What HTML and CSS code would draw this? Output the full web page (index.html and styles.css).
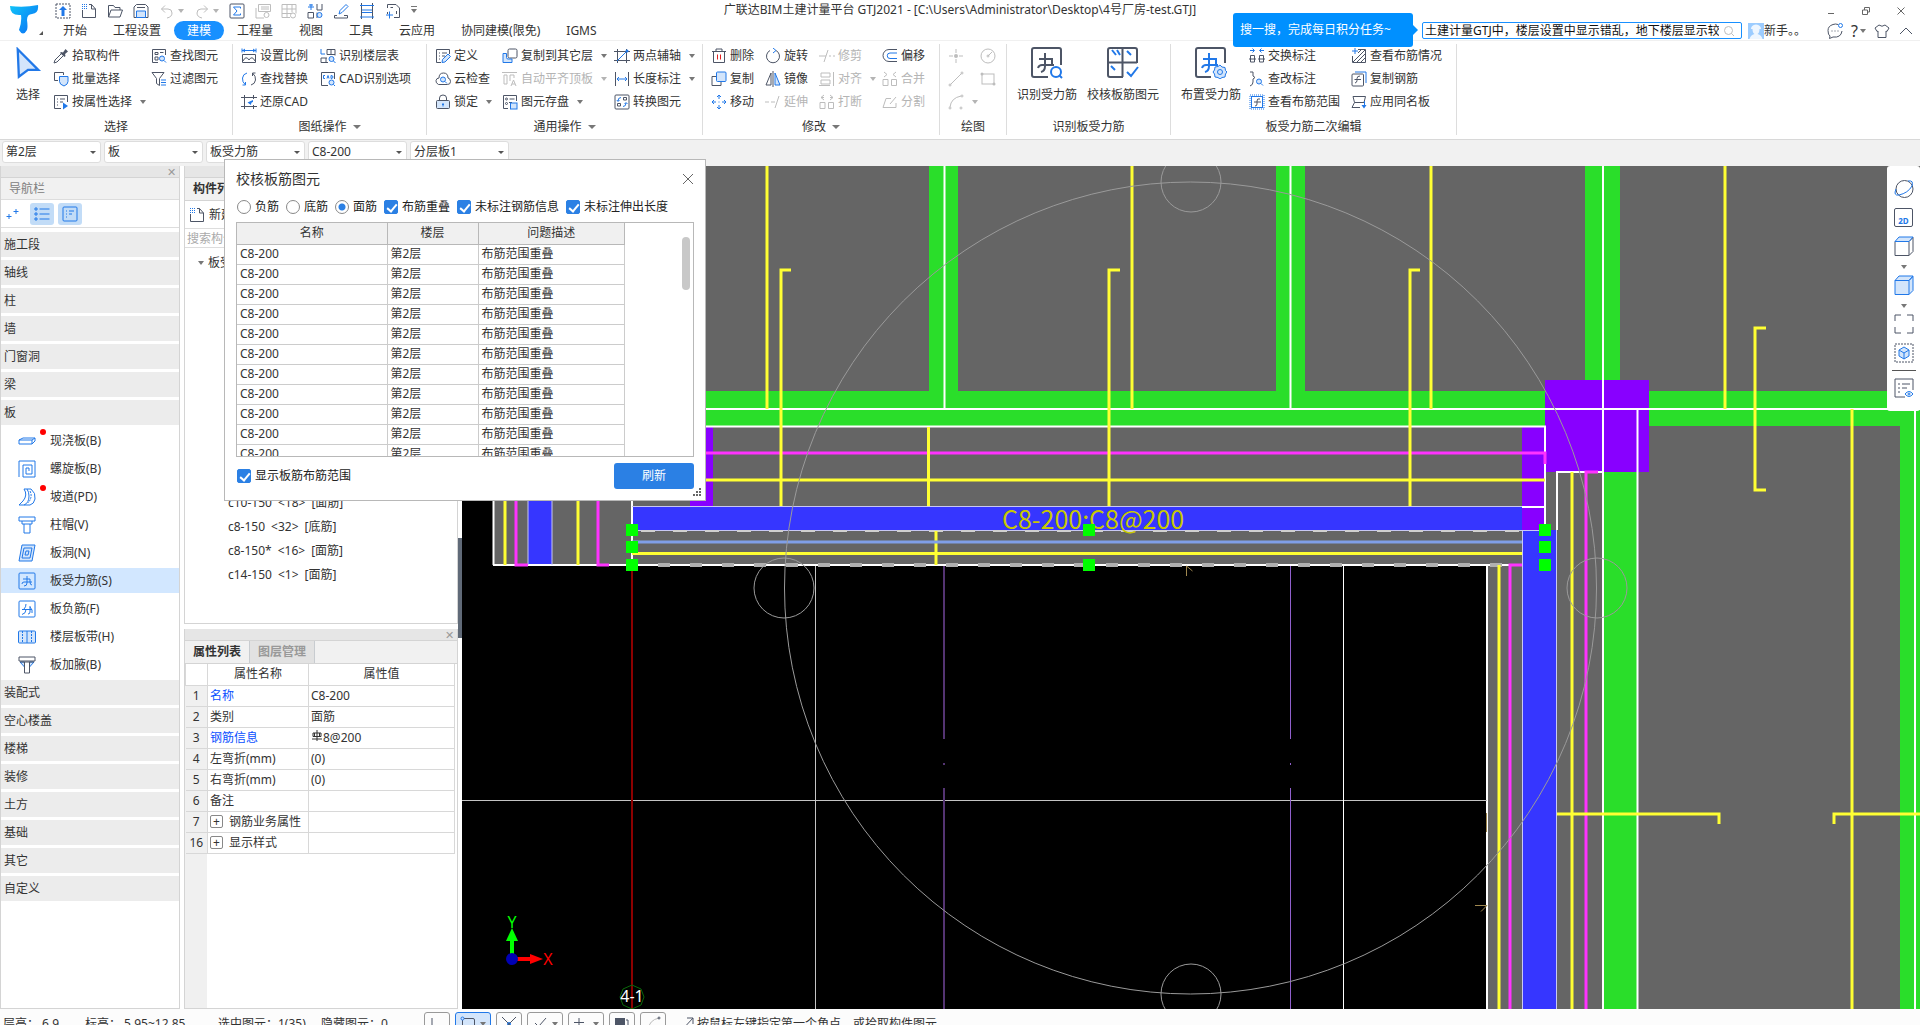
FILE: index.html
```html
<!DOCTYPE html>
<html lang="zh-CN">
<head>
    <meta charset="UTF-8">
    <meta name="viewport" content="width=device-width, initial-scale=1.0">
    <title>广联达BIM土建计量平台 GTJ2021</title>
    <link rel="stylesheet" href="styles.css">
</head>
<body>
<!-- icon sprite: k = dark line, b = blue line, g = disabled line, f = light blue fill -->
<svg class="sprite" aria-hidden="true">
    <symbol id="upload" viewBox="0 0 16 16"><rect class="k dash" x="1" y="1" width="14" height="14"/><path class="bf" d="M8 3l4 4H9.500v6h-3V7H4z"/></symbol>
    <symbol id="new" viewBox="0 0 16 16"><path class="k" d="M1.500 7v7.500h13V6L10.500 1.500H8M10.500 1.500V6h4"/><path class="b dots" d="M1 1.500h5M1 3.500h5M1 5.500h5"/></symbol>
    <symbol id="open" viewBox="0 0 16 16"><path class="k" d="M1.500 14V2.500h5l1.500 2h5V7M1.500 14L4 7h11.500L13 14z"/></symbol>
    <symbol id="save" viewBox="0 0 16 16"><path class="k" d="M1 14.500V4l2.500-2.500h9L15 4v10.500z"/><path class="k" d="M4 4.500h8"/><path class="b f" d="M3.500 14.500V8h9v6.500z"/></symbol>
    <symbol id="undo" viewBox="0 0 16 16"><path class="g" d="M6 2.500L2.500 6 6 9.500M2.500 6H9q4 0 4 4t-5 5"/></symbol>
    <symbol id="redo" viewBox="0 0 16 16"><path class="g" d="M10 2.500L13.500 6 10 9.500M13.500 6H7q-4 0-4 4t5 5"/></symbol>
    <symbol id="sum" viewBox="0 0 16 16"><rect class="k" x="1" y="1" width="14" height="14" rx="1"/><path class="b" d="M11.500 5.500V4h-7L8 8l-3.500 4h7v-1.500"/></symbol>
    <symbol id="sheet" viewBox="0 0 16 16"><path class="g" d="M3.500 8.500V1.500h12v7M1 5v10h8M3.500 8.500h12M6 4h8M6 6h8"/><circle class="g" cx="11.500" cy="12" r="2.500"/></symbol>
    <symbol id="gridg" viewBox="0 0 16 16"><path class="g" d="M1 1.500h14v9M1 1.500v13h8M6 1.500v13M11 1.500v8M1 6h14M1 10.500h9"/><circle class="g" cx="12" cy="12.500" r="2.500"/></symbol>
    <symbol id="layout" viewBox="0 0 16 16"><path class="k" d="M10 1v6h5V1M1 9.500h5.500V15H1zM10 15V9.500"/><path class="b" d="M4 1v6M1 4h6M2 2h4"/><circle class="b f" cx="12.500" cy="12" r="2.500"/></symbol>
    <symbol id="brush" viewBox="0 0 16 16"><path class="b" d="M6 11l1-3.500L13 1.500l2 2-6 6z"/><path class="k" d="M4 12.500H1.500V15h13v-2.500H11"/></symbol>
    <symbol id="frame" viewBox="0 0 16 16"><path class="k" d="M2.500 0v16M13.500 0v16"/><path class="b" d="M1 2.500h14M3 7h10M3 9.500h10M1 14h14"/></symbol>
    <symbol id="crop" viewBox="0 0 16 16"><path class="k" d="M2.500 5V1.500H11L14.500 5v9.500H9M2.500 9v2M5.500 4.500H8M11.500 11v-3"/><path class="b" d="M4.500 8.500v7M1 12h7"/></symbol>
    <symbol id="cursor" viewBox="0 0 24 28"><path class="b f thick" d="M3 2l18 18h-9l-8 6z"/></symbol>
    <symbol id="pick" viewBox="0 0 16 16"><path class="kf" d="M8 4l2 .5L12.500 1l2.500 2.500L12 6l.5 2-1 1-4.500-4z"/><path class="k" d="M8 6L2 12l-1 3 3-1 6-6"/></symbol>
    <symbol id="batch" viewBox="0 0 16 16"><path class="k" d="M5 9.500H1.500V1.500h9V4"/><path class="b f" d="M6.500 5.500h8.500v5q0 3-4 4.500-4.500-1.500-4.500-4.500z"/></symbol>
    <symbol id="attr" viewBox="0 0 16 16"><path class="k" d="M8 14.500H1.500V1.500h13V8M4 5h1M7 5h5M4 8h1M7 8h3M4 11h1"/><path class="bf" d="M10 8.500l5 3.500-5 3.500z"/></symbol>
    <symbol id="find" viewBox="0 0 16 16"><path class="k" d="M7 14.500H1.500V1.500h13V7M4 4.500h3v2H4zM9 4.500h3.500M4 9h3v3H4z"/><circle class="b f" cx="11" cy="10.500" r="2.500"/><path class="b" d="M13 12.500l2 2"/></symbol>
    <symbol id="filter" viewBox="0 0 16 16"><path class="k" d="M1 1.500h12L8.500 7.500v7l-3-2v-5z"/><path class="b" d="M10 9h5M10 11.500h5M10 14h5"/></symbol>
    <symbol id="scale" viewBox="0 0 16 16"><path class="b" d="M1 .5v4M15 .5v4M1 2.500h14M4 1L2 2.500 4 4M12 1l2 1.500L12 4"/><path class="k" d="M1.500 6.500h13v8h-13zM2 13q3-6 6-1 3-5 6 1"/></symbol>
    <symbol id="swap" viewBox="0 0 16 16"><path class="b" d="M6 2Q2 3 1.500 7t3 7M4.500 14H1.500M4.500 14v-3"/><path class="k" d="M10 14q4-1 4.500-5t-3-7M11.500 2h3M11.500 2v3"/></symbol>
    <symbol id="restore" viewBox="0 0 16 16"><path class="k" d="M3.500 1v14M0 3.500h16M12.500 1v4M0 12.500h16M12.500 11v4"/><path class="bf" d="M12 6v2q-2 0-2 3L6.500 8.500z"/></symbol>
    <symbol id="floors" viewBox="0 0 16 16"><path class="b" d="M1 1v5h4"/><path class="k" d="M7 1.500h8v6M7 1.500v5M11 1.500v5M7 6.500h8M1 10v4.500h7M6 10v4.500M1 10h6"/><circle class="b f" cx="11.500" cy="11" r="2.500"/><path class="b" d="M13.500 13l2 2"/></symbol>
    <symbol id="cad" viewBox="0 0 16 16"><path class="k" d="M8 14.500H1.500V1.500h13V8"/><path class="b" d="M5 4.500H3.500v3H5M7 7.500l1-3 1 3M11 4.500v3q2 0 2-1.500t-2-1.500"/><circle class="b f" cx="11.500" cy="11.500" r="2.500"/><path class="b" d="M13.500 13.500l1.500 1.500"/></symbol>
    <symbol id="define" viewBox="0 0 16 16"><path class="k" d="M6 14.500H1.500V1.500h13V6M4 5h1M7 5h5M4 8h1M7 8h3M4 11h1"/><path class="b f" d="M7 14.500l.5-3L13 6l2.500 2.500-5.500 5.500z"/></symbol>
    <symbol id="cloud" viewBox="0 0 16 16"><path class="k" d="M3.500 13.500Q.5 12 1 9.500T4 7q0-5 4.500-5T13 7q2.500.5 2.500 3.500t-3 3z"/><circle class="b f" cx="8" cy="8.500" r="2.500"/><path class="b" d="M10 10.500l2 2"/></symbol>
    <symbol id="lock" viewBox="0 0 16 16"><path class="k" d="M4.500 6V4q0-3 3.500-3t3.500 3v2"/><rect class="k f" x="1.500" y="6.500" width="13" height="8" rx="1"/><path class="b" d="M8 9v3.500M7 10.500h2"/></symbol>
    <symbol id="copyto" viewBox="0 0 16 16"><rect class="k" x="6" y="1" width="9" height="9" rx="1.500"/><path class="b f" d="M4.500 5.500H1v9h9V11H6q-1.500 0-1.500-1.500z"/></symbol>
    <symbol id="autotop" viewBox="0 0 16 16"><path class="g" d="M0 1.500h15M2 4h3v9H2zM8 10V4h4v3M9 15l2.500-6 2.500 6M10 13h3"/></symbol>
    <symbol id="stash" viewBox="0 0 16 16"><path class="k" d="M6 14.500H1.500V1.500h13V7M7.500 5h5M7 8.500h3"/><circle class="k" cx="4.500" cy="5" r="1"/><circle class="k" cx="4.500" cy="9.500" r="1"/><rect class="b f" x="8.500" y="9" width="6.500" height="6"/></symbol>
    <symbol id="axis" viewBox="0 0 16 16"><path class="k" d="M3.500 1v14M12.500 1v14M0 3.500h16M0 12.500h16"/><path class="b" d="M3 13L13 3"/><circle class="bf" cx="13" cy="3" r="1.500"/></symbol>
    <symbol id="length" viewBox="0 0 16 16"><path class="k" d="M1.500 1v14M14.500 1v14"/><path class="b" d="M3 8h10M5 6L3 8l2 2M11 6l2 2-2 2"/></symbol>
    <symbol id="convert" viewBox="0 0 16 16"><rect class="k" x="1" y="1" width="14" height="14" rx="1"/><path class="b" d="M7 3.500q-3 0-3 3.500M2.800 6L4 7.500 5.500 6M9 12.500q3 0 3-3.500M10.500 10L12 8.500l1.500 1.500"/><path class="k" d="M9.500 3.500h3V6h-3zM3.500 9.500h3V12h-3z"/></symbol>
    <symbol id="delete" viewBox="0 0 16 16"><path class="k" d="M1 3.500h14M5 3V1h6v2M2.500 4v10.500h11V4"/><path class="r" d="M6.500 6.500v5M9.500 6.500v5"/></symbol>
    <symbol id="copy" viewBox="0 0 16 16"><path class="k" d="M5 5.500H1v9h9V11"/><rect class="b f" x="5.500" y="1" width="9.500" height="9.500" rx="1"/></symbol>
    <symbol id="move" viewBox="0 0 16 16"><path class="b" d="M8 1v4M8 11v4M1 8h4M11 8h4M6 3l2-2 2 2M6 13l2 2 2-2M3 6L1 8l2 2M13 6l2 2-2 2M7.500 8h1"/></symbol>
    <symbol id="rotate" viewBox="0 0 16 16"><path class="k" d="M5 2.500A6.500 6.500 0 1 0 11 2.500"/><path class="b" d="M8 0l3 2.500L8 5"/></symbol>
    <symbol id="mirror" viewBox="0 0 16 16"><path class="k" d="M6 2v12H1z"/><path class="b f" d="M10 2v12h5z"/><path class="k" d="M8 0v16"/></symbol>
    <symbol id="extend" viewBox="0 0 16 16"><path class="g" d="M0 8h4M6 8h4M10 14l4-12"/></symbol>
    <symbol id="trim" viewBox="0 0 16 16"><path class="g" d="M0 8h7M5 14L9 2M10 8h2M14 8h2"/></symbol>
    <symbol id="align" viewBox="0 0 16 16"><path class="g" d="M2 2h9v4H2zM2 9h9v4H2zM14.500 1v14M0 14.500h11"/></symbol>
    <symbol id="break" viewBox="0 0 16 16"><path class="g" d="M1 8.500h5v6H1zM9.500 8.500h5v6h-5zM5 1L2 3.500 5 6M11 1l3 2.500L11 6M2 3.500h3M11 3.500h3"/></symbol>
    <symbol id="offset" viewBox="0 0 16 16"><path class="k" d="M15 1.500H7a6 6 0 0 0 0 12h8"/><path class="b" d="M15 5H8a2.500 2.500 0 0 0 0 5.500h7"/></symbol>
    <symbol id="merge" viewBox="0 0 16 16"><path class="g" d="M1 8.500h5v6H1zM9.500 8.500h5v6h-5zM2 1l3 2.500L2 6M14 1l-3 2.500L14 6"/></symbol>
    <symbol id="split" viewBox="0 0 16 16"><path class="g" d="M9 4.500H4L1 13.500h13V9M8 10l6-7"/></symbol>
    <symbol id="point" viewBox="0 0 16 16"><path class="g" d="M8 1v4M8 11v4M1 8h4M11 8h4"/><circle class="gf" cx="8" cy="8" r="2"/></symbol>
    <symbol id="circle" viewBox="0 0 16 16"><circle class="g" cx="8" cy="8" r="7"/><path class="g" d="M8 8l4-4"/><circle class="g" cx="8" cy="8" r="1"/></symbol>
    <symbol id="line" viewBox="0 0 16 16"><path class="g" d="M2.500 13.500l11-11"/><circle class="g" cx="2" cy="14" r="1"/><circle class="g" cx="14" cy="2" r="1"/></symbol>
    <symbol id="rect" viewBox="0 0 16 16"><rect class="g" x="2" y="3" width="12" height="10"/><circle class="gf" cx="2" cy="3" r="1.500"/><circle class="gf" cx="14" cy="13" r="1.500"/></symbol>
    <symbol id="arc" viewBox="0 0 16 16"><path class="g" d="M2 13Q3 4 13 2"/><circle class="g" cx="2" cy="14" r="1"/><circle class="g" cx="14" cy="2" r="1"/><circle class="g" cx="13" cy="14" r="1"/></symbol>
    <symbol id="rebarfind" viewBox="0 0 32 32"><path class="k thick" d="M17 30H3q-2 0-2-2V3q0-2 2-2h25q2 0 2 2v15M14 6v6M8 12h13v6M7 21q1-3 4-3h12M14 12v7q0 5-4 6"/><circle class="b thick" cx="25" cy="25" r="5"/><path class="b thick" d="M28 28l3 3"/></symbol>
    <symbol id="rebarcheck" viewBox="0 0 32 32"><path class="k thick" d="M16 30H3q-2 0-2-2V3q0-2 2-2h25q2 0 2 2v13M15.500 1v29M1 15.500h29"/><path class="b thick" d="M5 3l4 5M10 3l3 5M20 4l4 4M4 19l4 4M20 25l4 4 7-9"/></symbol>
    <symbol id="rebarset" viewBox="0 0 32 32"><path class="k thick" d="M16 30H3q-2 0-2-2V3q0-2 2-2h25q2 0 2 2v13"/><path class="b thick" d="M14 6v6M8 12h13v6M7 21q1-3 4-3h12M14 12v7q0 5-4 6"/><path class="b f" d="M25 18l2 2 3 .5.500 3L32 25l-1.500 2-.5 3-3 .5-2 1.500-2-1.500-3-.5-.5-3L18 25l1.500-2 .5-3 3-.5z"/><circle class="b" cx="25" cy="25" r="2.500"/></symbol>
    <symbol id="swapmark" viewBox="0 0 16 16"><path class="b" d="M1 2.500h4M3.500 .5L5.500 2.500 3.500 4.500M15 2.500h-4M12.500 .5l-2 2 2 2"/><path class="k" d="M1.500 14V7.500h4V14zM10.500 14V7.500h4V14zM0 11h7M9 11h7"/></symbol>
    <symbol id="editmark" viewBox="0 0 16 16"><path class="k" d="M1 1h3v4l2 1.500L4 8v3q0 3-3 4"/><circle class="b f" cx="10" cy="10.500" r="2.500"/><path class="b" d="M12 12.500l2 2"/></symbol>
    <symbol id="range" viewBox="0 0 16 16"><rect class="b dots" x="1" y="1" width="14" height="14"/><rect class="b" x="2.500" y="2.500" width="11" height="11"/><path class="k" d="M11 5q-3-1-3 2v3q0 2-2 2M5 8h7"/></symbol>
    <symbol id="situation" viewBox="0 0 16 16"><path class="k" d="M7 1.500h7.500v13h-13V8M2 14L14 2M6 14l8-8M10 14l4-4M7 5l3-3"/><path class="b" d="M4 0v6M1 3h6"/></symbol>
    <symbol id="copybar" viewBox="0 0 16 16"><path class="b" d="M4 1h11v11"/><rect class="k" x="1" y="3" width="11.500" height="12" rx="1"/><path class="k" d="M9 5q-3 0-3 2.500v2q0 2-2 2.500M3.500 8.500H10"/></symbol>
    <symbol id="apply" viewBox="0 0 16 16"><path class="k" d="M9 13.500H1l2.500-5L2 2.500h12.500L13 8.500H3.500"/><path class="b" d="M13.500 7v5"/><path class="bf" d="M10.500 11h5l-2.500 3.500z"/></symbol>
    <symbol id="plus2" viewBox="0 0 16 16"><path class="b" d="M4 8v5M1.500 10.500h5M11 3v5M8.500 5.500h5"/></symbol>
    <symbol id="list" viewBox="0 0 16 16"><path class="b" d="M5.500 3h10M5.500 8h10M5.500 13h10M1 2h2v2H1zM1 7h2v2H1zM1 12h2v2H1z"/></symbol>
    <symbol id="card" viewBox="0 0 16 16"><rect class="b" x="1" y="1" width="14" height="14" rx="1"/><path class="b" d="M4 5h1M7 5h5M4 8h1M7 8h3M4 11h1"/></symbol>
    <symbol id="slab" viewBox="0 0 18 18"><path class="b" d="M1 8l4-2h12l-3 2zM1 8v4h13V8M14 12l3-3V6"/></symbol>
    <symbol id="spiral" viewBox="0 0 18 18"><path class="b" d="M1 17V1h16v16H5V5h9v9H8V8h3v3"/></symbol>
    <symbol id="ramp" viewBox="0 0 18 18"><path class="b" d="M6 1q4 6-1 12l-4 4h5q5-2 5-9 0-4-2-7zM9 1h4q5 4 4 10-1 5-5 6H6"/><path class="b dash" d="M12 3q3 6-2 12"/></symbol>
    <symbol id="cap" viewBox="0 0 18 18"><path class="b" d="M1 1h16v4H1zM4 5v3h10V5M6 8v9h6V8"/></symbol>
    <symbol id="hole" viewBox="0 0 18 18"><path class="b f" d="M4 1h13l-3 16H1zM6 4h8l-2 10H4z"/><path class="b" d="M8 7h3l-1 4H7z"/></symbol>
    <symbol id="mainbar" viewBox="0 0 18 18"><rect class="b" x="1" y="1" width="16" height="16" rx="1"/><path class="b" d="M9 4v7q0 3-3 3M5 7h7v3M4 12q0-2 2-2h8M12 10q0 3 2 3"/></symbol>
    <symbol id="negbar" viewBox="0 0 18 18"><rect class="b" x="1" y="1" width="16" height="16" rx="1"/><path class="b" d="M8 4q0 3-2 5M4 9.500h10M8 9.500q0 4-4 5M12 6v6q0 2-2 2M12 7l2 3v3"/></symbol>
    <symbol id="strip" viewBox="0 0 18 18"><rect class="b f" x="0.500" y="3" width="17" height="12" rx="1"/><path class="b dash" d="M4.500 3v12M13.500 3v12"/><path class="b" d="M9 3v12"/></symbol>
    <symbol id="haunch" viewBox="0 0 18 18"><path class="b f" d="M2 6l4.500 5V6zM16 6l-4.500 5V6z"/><path class="k" d="M1 1h16v4H1zM6.500 6v11h5V6M2 6h14"/></symbol>
    <symbol id="orbit" viewBox="0 0 20 20"><circle class="k" cx="10.500" cy="10" r="8.500"/><path class="b" d="M2 10q-3 7 3 6 9-2 13-9 2-6-4-5"/></symbol>
    <symbol id="cube" viewBox="0 0 20 20"><path class="k" d="M1 5.500h14v14H1zM15 5.500l4-4v14l-4 4"/><path class="b f" d="M1 5.500l4-4.500h14l-4 4.500z"/></symbol>
    <symbol id="cubefill" viewBox="0 0 20 20"><path class="b f" d="M1 5.500h14v14H1zM15 5.500l4-4v14l-4 4M1 5.500l4-4.500h14l-4 4.500z"/></symbol>
    <symbol id="full" viewBox="0 0 20 20"><path class="k" d="M1 7V1h6M13 1h6v6M19 13v6h-6M7 19H1v-6"/></symbol>
    <symbol id="iso" viewBox="0 0 20 20"><rect class="k dash" x="1" y="1" width="18" height="18"/><path class="b f" d="M10 4l5 3v6l-5 3-5-3V7z"/><path class="b" d="M5 7l5 3 5-3M10 10v6"/></symbol>
    <symbol id="eye" viewBox="0 0 20 20"><path class="k" d="M11 19H1V1h18v11M4 6h2M8 6h8M4 10h2M8 10h5M4 14h2"/><path class="b" d="M11 16q4-5 8 0-4 5-8 0z"/><circle class="b" cx="15" cy="16" r="1"/></symbol>
    <symbol id="chat" viewBox="0 0 16 16"><path class="k" d="M11 1.500Q8.500.500 6 1.500 1 3 1 7.500T3 13l-.5 2.500L6 14q8 1 9-6"/><path class="k" d="M4.500 8h1M7.500 8h1M10.500 8h1"/><circle class="b" cx="13.500" cy="2.500" r="2"/></symbol>
    <symbol id="shirt" viewBox="0 0 16 16"><path class="k" d="M5 2q3 2.500 6 0l4 3-2 3.500-1-.5v6.500H4V8l-1 .5L1 5z"/></symbol>
</svg>

<header class="header">
    <div class="logo">
        <svg viewBox="0 0 30 30" width="30" height="30"><defs><linearGradient id="lg" x2="1" y2="1"><stop offset="0" stop-color="#10c4f8"/><stop offset="1" stop-color="#0a6cf5"/></linearGradient></defs><path fill="url(#lg)" d="M1 1q14 2 28-1 1 8-6 9-5 0-5 6 1 7 0 10-4 7-8 0 3-8 2-15Q1 11 1 1z"/></svg>
        <i class="corner"></i>
    </div>
    <div class="quick">
        <button aria-label="上传"><svg><use href="#upload"/></svg></button>
        <button aria-label="新建"><svg><use href="#new"/></svg></button>
        <button aria-label="打开"><svg><use href="#open"/></svg></button>
        <button aria-label="保存"><svg><use href="#save"/></svg></button>
        <button aria-label="撤销" disabled><svg><use href="#undo"/></svg><i class="caret"></i></button>
        <button aria-label="恢复" disabled><svg><use href="#redo"/></svg><i class="caret"></i></button>
        <button aria-label="汇总"><svg><use href="#sum"/></svg></button>
        <button aria-label="查看报表" disabled><svg><use href="#sheet"/></svg></button>
        <button aria-label="查看工程量" disabled><svg><use href="#gridg"/></svg></button>
        <button aria-label="查看钢筋"><svg><use href="#layout"/></svg></button>
        <button aria-label="刷"><svg><use href="#brush"/></svg></button>
        <button aria-label="三维"><svg><use href="#frame"/></svg></button>
        <button aria-label="裁剪"><svg><use href="#crop"/></svg></button>
        <button class="more" aria-label="更多"><i class="caret"></i></button>
    </div>
    <div class="title">广联达BIM土建计量平台 GTJ2021 - [C:\Users\Administrator\Desktop\4号厂房-test.GTJ]</div>
    <div class="window-buttons">
        <button aria-label="最小化"><svg viewBox="0 0 10 10"><path class="w" d="M2 7.500h6"/></svg></button>
        <button aria-label="还原"><svg viewBox="0 0 10 10"><path class="w" d="M1.500 4h5v4.500h-5zM3.500 4V1.500h5V6h-2"/></svg></button>
        <button aria-label="关闭"><svg viewBox="0 0 10 10"><path class="w" d="M1.500 1.500l7 7M8.500 1.500l-7 7"/></svg></button>
    </div>
    <nav class="tabs">
        <a href="#">开始</a>
        <a href="#">工程设置</a>
        <a href="#" class="active">建模</a>
        <a href="#">工程量</a>
        <a href="#">视图</a>
        <a href="#">工具</a>
        <a href="#">云应用</a>
        <a href="#">协同建模(限免)</a>
        <a href="#">IGMS</a>
    </nav>
    <div class="account">
        <div class="search">
            <div class="tip">搜一搜，完成每日积分任务~</div>
            <input type="text" aria-label="搜索" value="土建计量GTJ中，楼层设置中显示错乱，地下楼层显示较多">
            <svg viewBox="0 0 12 12"><circle class="g" cx="5.500" cy="5.500" r="4"/><path class="g" d="M8.500 8.500L11 11"/></svg>
        </div>
        <svg class="avatar" viewBox="0 0 16 16"><rect width="16" height="16" fill="#9cccff"/><path fill="#eef6ff" d="M3 6q0-4 5-4.500 5 .5 5 4.500h-1.500q0 4-2 5 4 1 5 5h-13q1-4 5-5-2-1-2-5z"/></svg>
        <span class="user">新手。。</span>
        <button aria-label="消息"><svg><use href="#chat"/></svg></button>
        <button class="help">?<i class="caret"></i></button>
        <button aria-label="皮肤"><svg><use href="#shirt"/></svg></button>
        <button aria-label="收起"><svg viewBox="0 0 16 16"><path class="k" d="M2 11l6-6 6 6"/></svg></button>
    </div>
</header>

<section class="ribbon">
    <div class="group g-select">
        <div class="tools">
            <button class="big"><svg><use href="#cursor"/></svg>选择</button>
            <div class="col">
                <button><svg><use href="#pick"/></svg>拾取构件</button>
                <button><svg><use href="#batch"/></svg>批量选择</button>
                <button><svg><use href="#attr"/></svg>按属性选择<i class="caret"></i></button>
            </div>
            <div class="col">
                <button><svg><use href="#find"/></svg>查找图元</button>
                <button><svg><use href="#filter"/></svg>过滤图元</button>
            </div>
        </div>
        <div class="caption">选择</div>
    </div>
    <div class="group g-drawing">
        <div class="tools">
            <div class="col">
                <button><svg><use href="#scale"/></svg>设置比例</button>
                <button><svg><use href="#swap"/></svg>查找替换</button>
                <button><svg><use href="#restore"/></svg>还原CAD</button>
            </div>
            <div class="col">
                <button><svg><use href="#floors"/></svg>识别楼层表</button>
                <button><svg><use href="#cad"/></svg>CAD识别选项</button>
            </div>
        </div>
        <div class="caption">图纸操作<i class="caret"></i></div>
    </div>
    <div class="group g-common">
        <div class="tools">
            <div class="col">
                <button><svg><use href="#define"/></svg>定义</button>
                <button><svg><use href="#cloud"/></svg>云检查</button>
                <button><svg><use href="#lock"/></svg>锁定<i class="caret"></i></button>
            </div>
            <div class="col">
                <button><svg><use href="#copyto"/></svg>复制到其它层<i class="caret"></i></button>
                <button disabled><svg><use href="#autotop"/></svg>自动平齐顶板<i class="caret"></i></button>
                <button><svg><use href="#stash"/></svg>图元存盘<i class="caret"></i></button>
            </div>
            <div class="col">
                <button><svg><use href="#axis"/></svg>两点辅轴<i class="caret"></i></button>
                <button><svg><use href="#length"/></svg>长度标注<i class="caret"></i></button>
                <button><svg><use href="#convert"/></svg>转换图元</button>
            </div>
        </div>
        <div class="caption">通用操作<i class="caret"></i></div>
    </div>
    <div class="group g-edit">
        <div class="tools">
            <div class="col">
                <button><svg><use href="#delete"/></svg>删除</button>
                <button><svg><use href="#copy"/></svg>复制</button>
                <button><svg><use href="#move"/></svg>移动</button>
            </div>
            <div class="col">
                <button><svg><use href="#rotate"/></svg>旋转</button>
                <button><svg><use href="#mirror"/></svg>镜像</button>
                <button disabled><svg><use href="#extend"/></svg>延伸</button>
            </div>
            <div class="col">
                <button disabled><svg><use href="#trim"/></svg>修剪</button>
                <button disabled><svg><use href="#align"/></svg>对齐<i class="caret"></i></button>
                <button disabled><svg><use href="#break"/></svg>打断</button>
            </div>
            <div class="col">
                <button><svg><use href="#offset"/></svg>偏移</button>
                <button disabled><svg><use href="#merge"/></svg>合并</button>
                <button disabled><svg><use href="#split"/></svg>分割</button>
            </div>
        </div>
        <div class="caption">修改<i class="caret"></i></div>
    </div>
    <div class="group g-draw">
        <div class="tools">
            <div class="col">
                <button disabled aria-label="点"><svg><use href="#point"/></svg></button>
                <button disabled aria-label="直线"><svg><use href="#line"/></svg></button>
                <button disabled aria-label="弧"><svg><use href="#arc"/></svg><i class="caret"></i></button>
            </div>
            <div class="col">
                <button disabled aria-label="圆"><svg><use href="#circle"/></svg></button>
                <button disabled aria-label="矩形"><svg><use href="#rect"/></svg></button>
            </div>
        </div>
        <div class="caption">绘图</div>
    </div>
    <div class="group g-detect">
        <div class="tools">
            <button class="big"><svg><use href="#rebarfind"/></svg>识别受力筋</button>
            <button class="big"><svg><use href="#rebarcheck"/></svg>校核板筋图元</button>
        </div>
        <div class="caption">识别板受力筋</div>
    </div>
    <div class="group g-second">
        <div class="tools">
            <button class="big"><svg><use href="#rebarset"/></svg>布置受力筋</button>
            <div class="col">
                <button><svg><use href="#swapmark"/></svg>交换标注</button>
                <button><svg><use href="#editmark"/></svg>查改标注</button>
                <button><svg><use href="#range"/></svg>查看布筋范围</button>
            </div>
            <div class="col">
                <button><svg><use href="#situation"/></svg>查看布筋情况</button>
                <button><svg><use href="#copybar"/></svg>复制钢筋</button>
                <button><svg><use href="#apply"/></svg>应用同名板</button>
            </div>
        </div>
        <div class="caption">板受力筋二次编辑</div>
    </div>
</section>

<section class="combos">
    <span class="combo"><select aria-label="楼层"><option>第2层</option></select></span>
    <span class="combo"><select aria-label="构件类型"><option>板</option></select></span>
    <span class="combo"><select aria-label="构件"><option>板受力筋</option></select></span>
    <span class="combo"><select aria-label="名称"><option>C8-200</option></select></span>
    <span class="combo"><select aria-label="分层板"><option>分层板1</option></select></span>
</section>

<main class="main">
    <aside class="nav panel">
        <div class="strip"><button aria-label="关闭">✕</button></div>
        <div class="nav-title">导航栏</div>
        <div class="nav-tools">
            <button aria-label="添加"><svg><use href="#plus2"/></svg></button>
            <button class="on" aria-label="列表"><svg><use href="#list"/></svg></button>
            <button class="on" aria-label="卡片"><svg><use href="#card"/></svg></button>
        </div>
        <ul class="nav-list">
            <li class="cat">施工段</li>
            <li class="cat">轴线</li>
            <li class="cat">柱</li>
            <li class="cat">墙</li>
            <li class="cat">门窗洞</li>
            <li class="cat">梁</li>
            <li class="cat">板</li>
            <li><svg><use href="#slab"/></svg><i class="dot"></i>现浇板(B)</li>
            <li><svg><use href="#spiral"/></svg>螺旋板(B)</li>
            <li><svg><use href="#ramp"/></svg><i class="dot"></i>坡道(PD)</li>
            <li><svg><use href="#cap"/></svg>柱帽(V)</li>
            <li><svg><use href="#hole"/></svg>板洞(N)</li>
            <li class="current"><svg><use href="#mainbar"/></svg>板受力筋(S)</li>
            <li><svg><use href="#negbar"/></svg>板负筋(F)</li>
            <li><svg><use href="#strip"/></svg>楼层板带(H)</li>
            <li><svg><use href="#haunch"/></svg>板加腋(B)</li>
            <li class="cat">装配式</li>
            <li class="cat">空心楼盖</li>
            <li class="cat">楼梯</li>
            <li class="cat">装修</li>
            <li class="cat">土方</li>
            <li class="cat">基础</li>
            <li class="cat">其它</li>
            <li class="cat">自定义</li>
        </ul>
    </aside>

    <div class="middle">
        <section class="components panel">
            <div class="strip"></div>
            <div class="panel-tabs"><button class="active">构件列表</button></div>
            <div class="component-tools"><button><svg><use href="#new"/></svg>新建</button></div>
            <input class="component-search" type="text" aria-label="搜索构件" placeholder="搜索构件...">
            <div class="tree-root"><i class="caret"></i>板受力筋</div>
            <ul class="tree">
                <li><span>c10-150</span><span>&lt;18&gt;</span><span>[面筋]</span></li>
                <li><span>c8-150</span><span>&lt;32&gt;</span><span>[底筋]</span></li>
                <li><span>c8-150*</span><span>&lt;16&gt;</span><span>[面筋]</span></li>
                <li><span>c14-150</span><span>&lt;1&gt;</span><span>[面筋]</span></li>
            </ul>
        </section>
        <section class="properties panel">
            <div class="strip"><button aria-label="关闭">✕</button></div>
            <div class="panel-tabs"><button class="active">属性列表</button><button>图层管理</button></div>
            <div class="property-body">
                <table>
                    <thead>
                        <tr><th class="num"></th><th class="name">属性名称</th><th>属性值</th></tr>
                    </thead>
                    <tbody>
                        <tr><td>1</td><td class="key">名称</td><td>C8-200</td></tr>
                        <tr><td>2</td><td>类别</td><td>面筋</td></tr>
                        <tr><td>3</td><td class="key">钢筋信息</td><td><svg class="grade" viewBox="0 0 10 12"><path d="M5 0v11M0 9h10M1 3h8v3.500H1zM2.500 3v3.500M7.500 3v3.500"/></svg>8@200</td></tr>
                        <tr><td>4</td><td>左弯折(mm)</td><td>(0)</td></tr>
                        <tr><td>5</td><td>右弯折(mm)</td><td>(0)</td></tr>
                        <tr><td>6</td><td>备注</td><td></td></tr>
                        <tr><td>7</td><td><button class="expand">+</button>钢筋业务属性</td><td></td></tr>
                        <tr><td>16</td><td><button class="expand">+</button>显示样式</td><td></td></tr>
                    </tbody>
                </table>
            </div>
        </section>
    </div>
    <div class="splitter"><button aria-label="折叠"></button></div>

    <div class="canvas">
        <svg class="drawing" viewBox="462 166 1458 843" preserveAspectRatio="xMinYMin slice">
            <rect x="462" y="166" width="1458" height="843" fill="#000"/>
            <!-- slabs -->
            <path fill="#656565" d="M493 166H1920V1009H1487V565H493z"/>
            <!-- beams -->
            <g fill="#2ade2a">
                <path d="M929 166h29v225h-29zM1276 166h29v225h-29zM1585 166h35v225h-35z"/>
                <path d="M706 391h1214v35H706zM1603 472h34v537h-34zM1900 391h20v618h-20z"/>
            </g>
            <!-- columns -->
            <path fill="#8800ff" d="M690 427h23v79h-23zM1522 427h23v103h-23zM1545 380h104v92h-104z"/>
            <g fill="#3636ff">
                <path d="M632 506h890v24H632zM528 490h24v75h-24zM1522 530h35v479h-35z"/>
            </g>
            <!-- slab outlines -->
            <g class="white">
                <path d="M706 409h1214M944.500 166v243M1290.500 166v243M1603 166v843M1637.500 409v600M1915 409v600"/>
                <path d="M706 426.500h839v103.500M1522 507h23M632 490v75M493.500 490v75M493 565h1029M1487 565v444M1557 530v-58h46"/>
            </g>
            <g class="pale">
                <path d="M632 506.500h890M632 530.500h913M528 490v75M552 490v75M1522.500 530v479M1556.500 530v479"/>
            </g>
            <path class="dashed" d="M641 531h881"/>
            <path class="dashed wide" d="M658 565h850"/>
            <!-- grid lines -->
            <path stroke="#c4c4c4" d="M462 800.500h1025M815.500 566v443"/>
            <path stroke="#fff" d="M1343.500 566v443"/>
            <path stroke="#543472" stroke-width="2" d="M944 566v173M944 763v2M944 788v221"/>
            <path stroke="#9060cc" d="M1290.500 566v173M1290.500 763v2M1290.500 788v221"/>
            <path stroke="#8c0000" stroke-width="2" d="M632 571v438"/>
            <!-- rebar -->
            <g class="magenta">
                <path d="M706 453h839v11M516 490v75h12M598 490v75h11M1510 1009V565h12M1586 1009V472h12"/>
            </g>
            <g class="yellow">
                <path d="M767 166v243M1132 166v243M1431 166v243M1725 166v243"/>
                <path d="M791 270h-10v236M1120 270h-11v236M1420 270h-10v236M1766 328h-11v162h11"/>
                <path d="M928.500 427v79M936 531v34M706 480h839M632 553.500h890M505 490v75M578 490v75"/>
                <path d="M1499 565v444M1572 472v537M1852 409v600M1557 814h162v10M1920 814h-86v10"/>
            </g>
            <path stroke="#809fe8" stroke-width="3" d="M632 542h890"/>
            <path stroke="#a08850" fill="none" d="M1186.500 576v-10l6 5M1475 905.500h12l-6 6M1486.500 813v19"/>
            <!-- orbit ring -->
            <g fill="none" stroke="#9a9a9a">
                <circle cx="1190.500" cy="588" r="406"/>
                <circle cx="784" cy="588" r="30"/>
                <circle cx="1597" cy="588" r="30"/>
                <circle cx="1191" cy="182" r="30"/>
                <circle cx="1191" cy="994" r="30"/>
            </g>
            <text class="bar-label" x="1002" y="529">C8-200:C8@200</text>
            <g fill="#00ff00">
                <path d="M626 524h12v12h-12zM626 541h12v12h-12zM626 559h12v12h-12zM1083 524h12v12h-12zM1083 559h12v12h-12z"/>
                <path d="M1539 524h12v12h-12zM1539 541h12v12h-12zM1539 559h12v12h-12z"/>
            </g>
            <path fill="none" stroke="#0a6a0a" d="M632 985l9 4 3 8-3 8-9 4-9-4-3-8 3-8z"/>
            <text class="axis-label" x="632" y="1002">4-1</text>
            <!-- coordinate axes -->
            <path stroke="#0f0" stroke-width="4" d="M512 959v-22"/>
            <path fill="#0f0" d="M512 928l6 13h-12z"/>
            <path stroke="#f00" stroke-width="4" d="M512 959h20"/>
            <path fill="#f00" d="M543 959l-13-5v10z"/>
            <circle cx="512" cy="959" r="6" fill="#0000b4"/>
            <text class="axis-y" x="512" y="928">Y</text>
            <text class="axis-x" x="548" y="965">X</text>
        </svg>
        <div class="view-tools">
            <button aria-label="动态观察"><svg><use href="#orbit"/></svg></button>
            <button class="two-d">2D</button>
            <button aria-label="视图"><svg><use href="#cube"/></svg></button>
            <i class="caret"></i>
            <button aria-label="实体"><svg><use href="#cubefill"/></svg></button>
            <i class="caret"></i>
            <button aria-label="全屏"><svg><use href="#full"/></svg></button>
            <button aria-label="局部三维"><svg><use href="#iso"/></svg></button>
            <hr>
            <button aria-label="显示设置"><svg><use href="#eye"/></svg></button>
        </div>
    </div>
</main>

<footer class="status">
    <div class="status-inner">
        <span class="s1">层高： 6.9</span>
        <span class="s2">标高： 5.95~12.85</span>
        <span class="s3">选中图元：1(35)</span>
        <span class="s4">隐藏图元：0</span>
        <div class="status-buttons">
            <button aria-label="正交"><svg viewBox="0 0 16 16"><path class="k" d="M3 2v12h11"/></svg></button>
            <button class="on" aria-label="矩形框选"><svg viewBox="0 0 16 16"><path class="k" d="M4 2.500h9q1.500 0 1.500 1.500v11M2.500 4v11"/><circle class="b" cx="2.500" cy="2.500" r="1.500"/></svg><i class="caret"></i></button>
            <button aria-label="交点"><svg viewBox="0 0 16 16"><path class="k" d="M1 1l13 13M15 1L2 14"/><circle class="b" cx="8" cy="8" r="1.500"/></svg></button>
            <button aria-label="垂点"><svg viewBox="0 0 16 16"><path class="k" d="M14 2L7 10M3 7l4 4"/></svg><i class="caret"></i></button>
            <button aria-label="偏移点"><svg viewBox="0 0 16 16"><path class="k" d="M6 2v9M1 6.500h10"/></svg><i class="caret"></i></button>
            <button aria-label="图层"><svg viewBox="0 0 16 16"><path class="kf" d="M1 2h10v10H1z"/><path class="k" d="M12 4h2v10H4"/></svg></button>
            <button aria-label="弧线"><svg viewBox="0 0 16 16"><path class="g" d="M3 14Q4 4 14 2"/><circle class="k" cx="14" cy="2" r="1"/></svg></button>
        </div>
        <svg class="hint-icon" viewBox="0 0 16 16"><path class="k" d="M1 12l2 2L14 2M8 2h6v6"/></svg>
        <span>按鼠标左键指定第一个角点，或拾取构件图元</span>
    </div>
</footer>

<section class="dialog" role="dialog" aria-labelledby="dialog-title">
    <div class="dialog-head">
        <h2 id="dialog-title">校核板筋图元</h2>
        <button aria-label="关闭"><svg viewBox="0 0 12 12"><path class="w" d="M1 1l10 10M11 1L1 11"/></svg></button>
    </div>
    <div class="options">
        <label><input type="radio" name="bar">负筋</label>
        <label><input type="radio" name="bar">底筋</label>
        <label><input type="radio" name="bar" checked>面筋</label>
        <label><input type="checkbox" checked>布筋重叠</label>
        <label><input type="checkbox" checked>未标注钢筋信息</label>
        <label><input type="checkbox" checked>未标注伸出长度</label>
    </div>
    <div class="results">
        <table>
            <thead>
                <tr><th class="c-name">名称</th><th class="c-floor">楼层</th><th>问题描述</th></tr>
            </thead>
            <tbody>
                <tr><td>C8-200</td><td>第2层</td><td>布筋范围重叠</td></tr>
                <tr><td>C8-200</td><td>第2层</td><td>布筋范围重叠</td></tr>
                <tr><td>C8-200</td><td>第2层</td><td>布筋范围重叠</td></tr>
                <tr><td>C8-200</td><td>第2层</td><td>布筋范围重叠</td></tr>
                <tr><td>C8-200</td><td>第2层</td><td>布筋范围重叠</td></tr>
                <tr><td>C8-200</td><td>第2层</td><td>布筋范围重叠</td></tr>
                <tr><td>C8-200</td><td>第2层</td><td>布筋范围重叠</td></tr>
                <tr><td>C8-200</td><td>第2层</td><td>布筋范围重叠</td></tr>
                <tr><td>C8-200</td><td>第2层</td><td>布筋范围重叠</td></tr>
                <tr><td>C8-200</td><td>第2层</td><td>布筋范围重叠</td></tr>
                <tr><td>C8-200</td><td>第2层</td><td>布筋范围重叠</td></tr>
            </tbody>
        </table>
        <i class="thumb"></i>
    </div>
    <div class="dialog-foot">
        <label><input type="checkbox" checked>显示板筋布筋范围</label>
        <button class="primary">刷新</button>
    </div>
    <svg class="grip" viewBox="0 0 9 9"><path d="M6 0h2v2H6zM3 3h2v2H3zM6 3h2v2H6zM0 6h2v2H0zM3 6h2v2H3zM6 6h2v2H6z"/></svg>
</section>
</body>
</html>
```
FILE: styles.css
```css
* {
    box-sizing: border-box;
}
body {
    margin: 0;
    height: 100vh;
    display: flex;
    flex-direction: column;
    overflow: hidden;
    background: #fff;
    color: #333;
    font: 12px/16px "Noto Sans", "Noto Sans CJK SC", sans-serif;
}
button, input, select {
    font: inherit;
    color: inherit;
}
button {
    border: 0;
    padding: 0;
    background: none;
    display: flex;
    align-items: center;
    justify-content: center;
    white-space: nowrap;
}
button:disabled {
    color: #b4b4b4;
}
button:disabled .caret {
    border-top-color: #b4b4b4;
}
ul {
    list-style: none;
    margin: 0;
    padding: 0;
}
a {
    color: inherit;
    text-decoration: none;
}
svg {
    flex: none;
    width: 16px;
    height: 16px;
}
.sprite {
    position: absolute;
    width: 0;
    height: 0;
}

/* icon strokes */
.k, .b, .g, .r, .w {
    fill: none;
    stroke: #4d5566;
}
.b { stroke: #2178e8; }
.g { stroke: #bdbdbd; }
.r { stroke: #e02020; }
.w { stroke: #666; }
.f { fill: #d3e5fb; }
.kf { fill: #4d5566; }
.bf { fill: #2178e8; }
.gf { fill: #bdbdbd; }
.thick { stroke-width: 2; }
.dash { stroke-dasharray: 2 1; }
.dots { stroke-dasharray: 1 1; }
.caret {
    flex: none;
    border: 3px solid transparent;
    border-top: 4px solid #777;
    border-bottom: 0;
}

/* header */
.header {
    display: grid;
    grid-template-columns: 50px 1fr auto 1fr 50px;
    grid-template-rows: 21px 19px;
    border-bottom: 1px solid #f0f0f0;
}
.logo {
    grid-row: 1 / 3;
    display: flex;
    align-items: flex-end;
    padding: 0 6px 5px 9px;
}
.logo svg {
    width: 30px;
    height: 30px;
}
.corner {
    border: 2px solid #555;
    border-top-color: transparent;
    border-left-color: transparent;
}
.quick {
    display: flex;
    align-items: center;
    gap: 10px;
    padding-left: 5px;
}
.quick button {
    gap: 3px;
}
.more::before {
    content: "";
    position: absolute;
    width: 6px;
    height: 1px;
    margin-top: -8px;
    background: #777;
}
.title {
    padding-top: 2px;
}
.window-buttons {
    grid-column: 4 / 6;
    display: flex;
    justify-content: flex-end;
    gap: 25px;
    padding-right: 14px;
}
.window-buttons svg {
    width: 10px;
    height: 10px;
}
.tabs {
    grid-row: 2;
    grid-column: 2 / 4;
    display: flex;
}
.tabs a {
    height: 19px;
    line-height: 20px;
    padding: 0 13px;
}
.tabs .active {
    background: #1890ff;
    color: #fff;
    border-radius: 10px;
}
.account {
    grid-row: 2;
    grid-column: 3 / 6;
    display: flex;
    align-items: center;
    justify-content: flex-end;
    padding-right: 6px;
}
.account button {
    margin-left: 8px;
}
.search {
    position: relative;
    width: 320px;
    height: 17px;
    display: flex;
    align-items: center;
    border: 1px solid #1890ff;
    border-radius: 2px;
    padding: 0 6px 0 2px;
    margin-right: 6px;
}
.search input {
    flex: 1;
    min-width: 0;
    height: 15px;
    border: 0;
    padding: 0;
    margin-right: 4px;
    color: #111;
}
.search svg {
    width: 12px;
    height: 12px;
}
.tip {
    position: absolute;
    z-index: 2;
    right: 328px;
    top: -10px;
    width: 180px;
    height: 34px;
    padding-left: 7px;
    line-height: 34px;
    background: #0090ff;
    color: #fff;
    border-radius: 3px;
}
.tip::after {
    content: "";
    position: absolute;
    left: 100%;
    top: 12px;
    border: 5px solid transparent;
    border-left-color: #0090ff;
    border-right: 0;
}
.user {
    width: 55px;
}
.account .help {
    font-size: 16px;
    gap: 2px;
}

/* ribbon */
.ribbon {
    display: flex;
    height: 99px;
    padding: 3px 0 4px;
    border-bottom: 1px solid #d8d8d8;
}
.group {
    display: flex;
    flex: none;
    flex-direction: column;
    justify-content: space-between;
    border-right: 1px solid #ddd;
}
.tools {
    display: flex;
    height: 69px;
}
.col {
    display: flex;
    flex: none;
    flex-direction: column;
}
.col button {
    height: 23px;
    justify-content: flex-start;
    gap: 3px;
}
.col .caret {
    margin-left: 5px;
}
.big {
    flex: none;
    flex-direction: column;
    justify-content: flex-start;
    gap: 8px;
    padding-top: 3px;
}
.big svg {
    width: 32px;
    height: 32px;
}
.caption {
    display: flex;
    align-items: center;
    justify-content: center;
    gap: 6px;
}
.caption .caret {
    border-width: 4px 4px 0;
}
.g-select { width: 233px; }
.g-select .tools { padding-left: 16px; }
.g-select .big { width: 24px; margin-right: 13px; }
.g-select .col { width: 98px; }
.g-select .col:last-child { width: 82px; }
.g-drawing { width: 194px; }
.g-drawing .tools { padding-left: 8px; }
.g-drawing .col { width: 79px; }
.g-common { width: 276px; }
.g-common .tools { padding-left: 8px; }
.g-common .col { width: 67px; }
.g-common .col:nth-child(2) { width: 112px; }
.g-edit { width: 237px; }
.g-edit .tools { padding-left: 8px; }
.g-edit .col { width: 54px; }
.g-edit .col:nth-child(3) { width: 63px; }
.g-draw { width: 67px; }
.g-draw .tools { padding-left: 8px; }
.g-draw .col { width: 32px; }
.g-draw .col:last-child { width: 16px; }
.g-detect { width: 164px; }
.g-detect .tools { gap: 10px; padding-left: 10px; }
.g-second { width: 286px; }
.g-second .tools { padding-left: 10px; }
.g-second .big { margin-right: 8px; }
.g-second .col { width: 102px; }

/* combo row */
.combos {
    display: flex;
    gap: 3px;
    height: 26px;
    padding: 1px 2px;
    background: #f1f1f1;
}
.combo {
    position: relative;
    width: 99px;
    height: 22px;
}
.combo select {
    appearance: none;
    width: 100%;
    height: 22px;
    padding: 0 4px 0 3px;
    background: #fff;
    border: 1px solid #ddd;
    border-radius: 3px;
}
.combo::after {
    content: "";
    position: absolute;
    right: 5px;
    top: 10px;
    border: 3px solid transparent;
    border-top-color: #555;
    border-bottom: 0;
}

/* docked panels */
.main {
    flex: 1;
    min-height: 0;
    display: flex;
}
.panel {
    display: flex;
    flex-direction: column;
    border: 1px solid #d4d4d4;
    border-top: 0;
}
.strip {
    flex: none;
    display: flex;
    justify-content: flex-end;
    height: 12px;
    padding-right: 3px;
    background: #e6e6e6;
    border-bottom: 1px solid #d4d4d4;
}
.strip button {
    font-size: 11px;
    line-height: 11px;
    color: #999;
}
.nav {
    width: 180px;
    margin-right: 4px;
}
.nav-title {
    height: 22px;
    line-height: 22px;
    padding-left: 8px;
    color: #808080;
    background: #f1f1f1;
    border-bottom: 1px solid #ddd;
}
.nav-tools {
    display: flex;
    align-items: center;
    gap: 4px;
    height: 28px;
    border-bottom: 1px solid #ddd;
}
.nav-tools button {
    width: 24px;
    height: 22px;
    border-radius: 3px;
}
.nav-tools button:first-child {
    margin-right: 1px;
}
.nav-tools .on {
    background: #c2dcf7;
}
.nav-list {
    display: flex;
    flex-direction: column;
    gap: 3px;
    padding-top: 4px;
}
.nav-list li {
    position: relative;
    display: flex;
    align-items: center;
    gap: 14px;
    height: 25px;
    padding-left: 17px;
}
.nav-list svg {
    width: 18px;
    height: 18px;
}
.nav-list .cat {
    padding-left: 3px;
    background: #ececec;
}
.nav-list .current {
    background: #d2e7ff;
}
.dot {
    position: absolute;
    left: 39px;
    top: 1px;
    width: 6px;
    height: 6px;
    border-radius: 50%;
    background: #f00;
}
.middle {
    display: flex;
    flex-direction: column;
    gap: 5px;
    width: 274px;
}
.components {
    flex: 1;
    min-height: 0;
}
.panel-tabs {
    display: flex;
    flex: none;
    height: 23px;
    background: #f1f1f1;
    border-bottom: 1px solid #d4d4d4;
}
.panel-tabs button {
    padding: 0 8px;
    font-weight: bold;
    color: #999;
    background: #e2e2e2;
    border-right: 1px solid #c8ccd0;
}
.panel-tabs .active {
    color: #333;
    background: #f1f1f1;
}
.component-tools {
    display: flex;
    flex: none;
    height: 27px;
    padding-left: 4px;
}
.component-tools button {
    gap: 4px;
}
.component-search {
    flex: none;
    height: 20px;
    border: 1px solid #ddd;
    border-width: 1px 0;
    padding: 0 2px;
}
.component-search::placeholder {
    color: #aaa;
}
.tree-root {
    display: flex;
    align-items: center;
    gap: 4px;
    height: 30px;
    padding-left: 13px;
}
.tree {
    margin-top: auto;
    padding: 0 0 36px 43px;
}
.tree li {
    display: flex;
    gap: 6px;
    height: 24px;
    line-height: 24px;
}
.properties {
    height: 380px;
}
.property-body {
    flex: 1;
    padding-right: 2px;
    background: linear-gradient(to right, #f0f0f0 22px, #fff 22px);
}
.properties table, .results table {
    border-collapse: collapse;
    table-layout: fixed;
    width: 100%;
}
.properties th, .properties td {
    height: 21px;
    padding: 0 2px;
    border: 1px solid #d8d8d8;
    border-top: 0;
    font-weight: normal;
    white-space: nowrap;
}
.properties th {
    background: #fff;
}
.properties .num { width: 22px; }
.properties .name { width: 101px; }
.properties td:first-child {
    padding: 0;
    text-align: center;
    background: #f0f0f0;
    border-left: 0;
}
.properties .key {
    color: #0a50ff;
}
.expand {
    display: inline-flex;
    width: 13px;
    height: 13px;
    margin-right: 6px;
    border: 1px solid #888;
    border-radius: 2px;
    line-height: 11px;
}
.grade {
    width: 10px;
    height: 12px;
    margin: 0 1px;
    fill: none;
    stroke: #333;
}
.splitter {
    width: 4px;
    display: flex;
    align-items: center;
}
.splitter button {
    width: 4px;
    height: 100px;
    background: #606a78;
}

/* drawing area */
.canvas {
    position: relative;
    flex: 1;
    min-width: 0;
    background: #000;
}
.drawing {
    display: block;
    width: 100%;
    height: 100%;
}
.white, .pale, .yellow, .magenta, .dashed {
    fill: none;
    stroke: #fff;
    stroke-width: 2;
}
.pale {
    stroke: #c8c8f4;
    stroke-width: 1;
}
.yellow {
    stroke: #ffff33;
    stroke-width: 3;
}
.magenta {
    stroke: #ff33ff;
    stroke-width: 3;
}
.dashed {
    stroke: #d0d0d0;
    stroke-dasharray: 14 18;
}
.dashed.wide {
    stroke: #b0b0b0;
    stroke-width: 4;
    stroke-dasharray: 12 20;
}
.bar-label {
    font-size: 25px;
    fill: #c8c800;
    font-family: "Noto Sans CJK SC", sans-serif;
}
.axis-label, .axis-x, .axis-y {
    font-size: 16px;
    fill: #fff;
    text-anchor: middle;
}
.axis-x { fill: #f00; }
.axis-y { fill: #0f0; }
.view-tools {
    position: absolute;
    top: 0;
    right: 0;
    width: 33px;
    height: 245px;
    display: flex;
    flex-direction: column;
    align-items: center;
    gap: 9px;
    padding-top: 13px;
    background: #fff;
    border-radius: 3px;
}
.view-tools svg {
    width: 20px;
    height: 20px;
}
.view-tools .caret {
    margin-bottom: -3px;
}
.view-tools hr {
    width: 24px;
    margin: -2px 0;
    border: 0;
    border-top: 1px solid #555;
}
.two-d {
    width: 19px;
    height: 19px;
    padding-top: 6px;
    border: 1px solid #4d5566;
    border-radius: 2px;
    font-size: 8px;
    font-weight: bold;
    color: #2178e8;
}

/* status bar */
.status {
    height: 16px;
    overflow: hidden;
    background: #fcfcfc;
}
.status-inner {
    display: flex;
    align-items: center;
    height: 30px;
    padding-left: 3px;
    white-space: nowrap;
}
.s1 { width: 82px; }
.s2 { width: 133px; }
.s3 { width: 103px; }
.s4 { width: 103px; }
.status-buttons {
    display: flex;
    gap: 5px;
    margin-right: 13px;
}
.status-buttons button {
    height: 24px;
    gap: 4px;
    padding: 0 4px;
    border: 1px solid #999;
    border-radius: 3px;
}
.status-buttons .on {
    background: #d3e5fb;
    border-color: #2178e8;
}
.hint-icon {
    margin-right: 2px;
}

/* check dialog */
.dialog {
    position: absolute;
    left: 224px;
    top: 159px;
    width: 482px;
    padding: 7px 11px 11px;
    background: #fff;
    border: 1px solid #b8b8b8;
}
.dialog-head {
    display: flex;
    align-items: center;
    justify-content: space-between;
    height: 24px;
}
.dialog-head h2 {
    margin: 0;
    font-size: 14px;
    font-weight: normal;
}
.dialog-head svg {
    width: 12px;
    height: 12px;
}
.options {
    display: flex;
    gap: 7px;
    height: 31px;
    padding-left: 1px;
}
.dialog label {
    display: flex;
    align-items: center;
    gap: 4px;
    color: #222;
}
.dialog input {
    appearance: none;
    position: relative;
    width: 14px;
    height: 14px;
    margin: 0;
    border: 1px solid #888;
    background: #fff;
}
.dialog input[type="radio"] {
    border-radius: 50%;
}
.dialog input[type="radio"]:checked {
    background: radial-gradient(#2b80e4 3px, #fff 4px);
}
.dialog input[type="checkbox"] {
    border-color: #2b80e4;
    background: #2b80e4;
    border-radius: 2px;
}
.dialog input[type="checkbox"]::after {
    content: "";
    position: absolute;
    left: 4px;
    top: 1px;
    width: 4px;
    height: 8px;
    border: solid #fff;
    border-width: 0 2px 2px 0;
    transform: rotate(40deg);
}
.results {
    position: relative;
    height: 235px;
    overflow: hidden;
    border: 1px solid #b8b8b8;
}
.results table {
    width: 388px;
}
.results th, .results td {
    height: 20px;
    padding: 0 3px;
    border: 1px solid #ccc;
    font-weight: normal;
    line-height: 16px;
}
.results tr > :first-child { border-left: 0; }
.results th {
    height: 21px;
    border-top: 0;
    border-color: #b8b8b8;
    background: #f0f0f0;
}
.c-name { width: 150px; }
.c-floor { width: 91px; }
.thumb {
    position: absolute;
    top: 14px;
    right: 3px;
    width: 8px;
    height: 53px;
    border-radius: 4px;
    background: #c8c8c8;
}
.dialog-foot {
    display: flex;
    align-items: center;
    justify-content: space-between;
    padding: 6px 0 0 1px;
}
.primary {
    width: 80px;
    height: 26px;
    border-radius: 3px;
    background: #2b80e4;
    color: #fff;
}
.grip {
    position: absolute;
    right: 3px;
    bottom: 3px;
    width: 9px;
    height: 9px;
    fill: #666;
}
```
